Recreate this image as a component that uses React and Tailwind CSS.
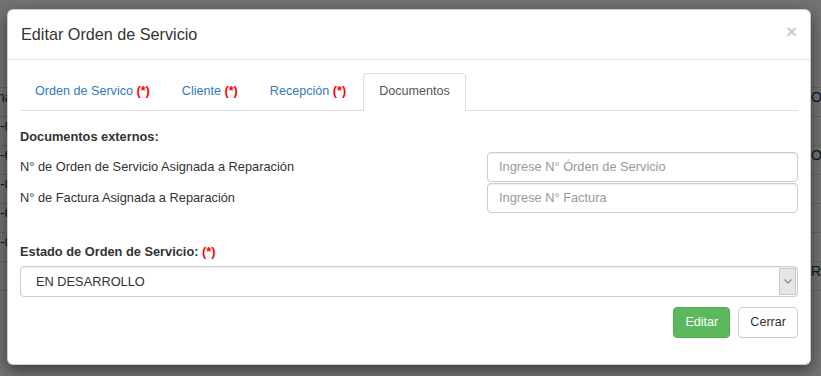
import React from "react";

const rows = [
  { l: "na", r: "O", m: true },
  { l: "-0", r: "" },
  { l: "-0", r: "O" },
  { l: "-0", r: "" },
  { l: "-0", r: "" },
  { l: "-0", r: "" },
  { l: "", r: "R" },
];

function Req() {
  return <span className="font-bold text-[#ff0000]">(*)</span>;
}

export default function App() {
  return (
    <div
      className="relative w-[821px] h-[376px] overflow-hidden bg-white text-[12.8px] text-[#333]"
      style={{ fontFamily: '"Liberation Sans", Arial, sans-serif' }}
    >
      {/* background page */}
      <div className="flex flex-col pt-[87px]">
        {rows.map((row, i) => (
          <div key={i} className="flex h-[29px] border-t border-[#ddd] justify-between">
            <div className="w-[40px] overflow-hidden whitespace-nowrap pt-[1px] text-[14px] leading-[16px] text-[#333]">
              <span className={row.m ? "block -ml-[3px]" : "block"}>{row.l}</span>
            </div>
            <div className="w-[10px] overflow-hidden whitespace-nowrap pt-[1px] text-[14px] leading-[16px] text-[#333]">
              {row.r}
            </div>
          </div>
        ))}
        <div className="border-t border-[#ddd]" />
      </div>

      {/* backdrop */}
      <div className="absolute inset-0 bg-black/[0.55]" />

      {/* modal */}
      <div className="absolute left-[7px] top-[9px] w-[804px] h-[356px] bg-white rounded-[6px] border border-black/20 shadow-[0_5px_15px_rgba(0,0,0,0.5)] flex flex-col">
        <div className="h-[50px] shrink-0 flex items-center justify-between pl-[13px] pr-[13px] border-b border-[#e5e5e5]">
          <h4 className="text-[16.2px] leading-[20px] text-[#333] -mt-[1px]">Editar Orden de Servicio</h4>
          <span className="text-[19px] font-bold leading-none text-black opacity-20 -mt-[6px]">×</span>
        </div>

        <div className="flex flex-col pl-[12px] pr-[12px] pt-[13px]">
          {/* tabs */}
          <div className="flex border-b border-[#ddd] h-[38px] text-[12.6px]">
            <div className="h-[37px] flex items-center px-[15px] mr-[2px] text-[#337ab7] whitespace-nowrap">
              Orden de Servico&nbsp;<Req />
            </div>
            <div className="h-[37px] flex items-center px-[15px] mr-[2px] text-[#337ab7] whitespace-nowrap">
              Cliente&nbsp;<Req />
            </div>
            <div className="h-[37px] flex items-center px-[15px] mr-[2px] text-[#337ab7] whitespace-nowrap">
              Recepción&nbsp;<Req />
            </div>
            <div className="h-[38px] flex items-center px-[15px] pb-[1px] text-[#555] bg-white border border-[#ddd] border-b-transparent rounded-t-[4px] whitespace-nowrap">
              Documentos
            </div>
          </div>

          <div className="mt-[17px] font-bold leading-[18px]">Documentos externos:</div>

          <div className="mt-[6px] flex flex-col gap-[1px]">
            <div className="flex items-center justify-between">
              <span className="leading-[18px]">N° de Orden de Servicio Asignada a Reparación</span>
              <div className="w-[311px] h-[30px] border border-[#ccc] rounded-[4px] flex items-center px-[11px] text-[#999] shadow-[inset_0_1px_1px_rgba(0,0,0,0.075)]">
                Ingrese N° Órden de Servicio
              </div>
            </div>
            <div className="flex items-center justify-between">
              <span className="leading-[18px]">N° de Factura Asignada a Reparación</span>
              <div className="w-[311px] h-[30px] border border-[#ccc] rounded-[4px] flex items-center px-[11px] text-[#999] shadow-[inset_0_1px_1px_rgba(0,0,0,0.075)]">
                Ingrese N° Factura
              </div>
            </div>
          </div>

          <div className="mt-[30px] font-bold leading-[18px]">
            Estado de Orden de Servicio: <Req />
          </div>

          <div className="mt-[5px] h-[31px] border border-[#ccc] rounded-[4px] flex items-stretch justify-between shadow-[inset_0_1px_1px_rgba(0,0,0,0.075)]">
            <span className="flex items-center pl-[15px] text-[#333]">EN DESARROLLO</span>
            <span className="w-[17px] my-[1px] mr-[1px] bg-[#e6e6e6] border border-[#c9c9c9] flex items-center justify-center">
              <svg width="8" height="5" viewBox="0 0 8 5">
                <path d="M0.5 0.5 L4 4 L7.5 0.5" fill="none" stroke="#888" strokeWidth="1.2" />
              </svg>
            </span>
          </div>

          <div className="mt-[10px] flex justify-end gap-[8px]">
            <button className="h-[31px] px-[11px] rounded-[4px] bg-[#5cb85c] border border-[#4cae4c] text-white text-[12.6px]">
              Editar
            </button>
            <button className="h-[31px] px-[11px] rounded-[4px] bg-white border border-[#ccc] text-[#333] text-[12.6px]">
              Cerrar
            </button>
          </div>
        </div>
      </div>
    </div>
  );
}
